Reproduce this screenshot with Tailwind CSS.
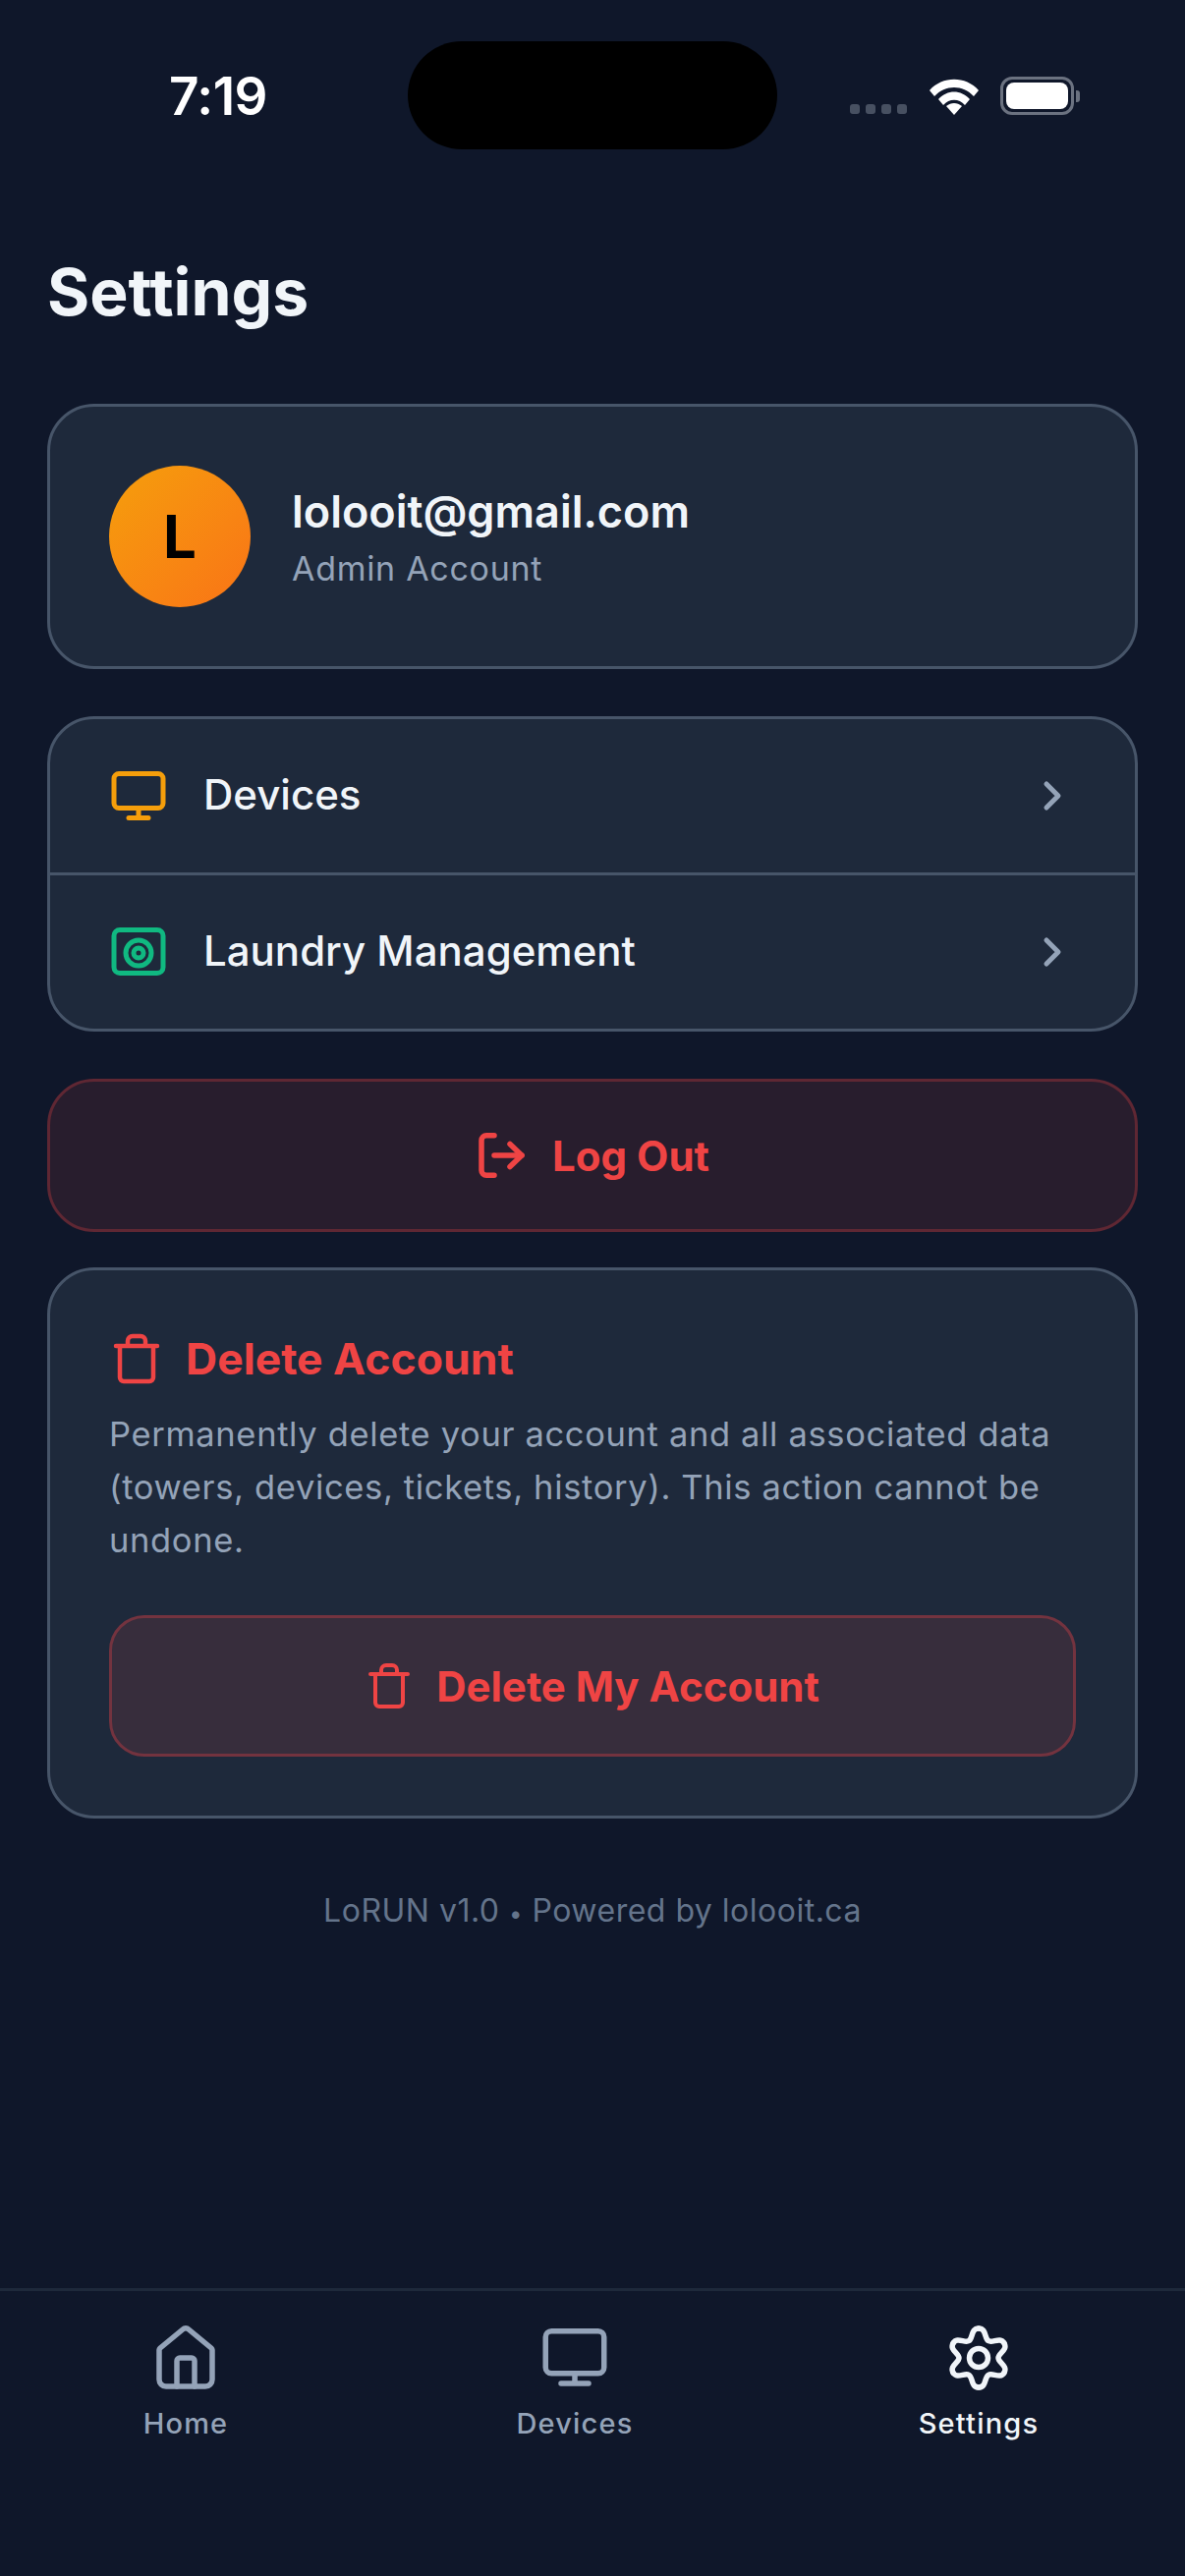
<!DOCTYPE html>
<html>
<head>
<meta charset="utf-8">
<script src="https://cdn.jsdelivr.net/npm/@tailwindcss/browser@4"></script>
</head>
<body class="bg-[#0f172a]">
<div class="relative w-[1206px] h-[2622px] flex flex-col bg-[#0f172a] font-['Inter',sans-serif] overflow-hidden">

  <!-- status bar -->
  <div class="relative h-[257px] shrink-0">
    <div class="absolute left-[162px] top-[67px] text-[53px] leading-[62px] font-semibold text-white w-[120px] text-center tracking-[-0.5px]">7:19</div>
    <div class="absolute left-[415px] top-[42px] w-[376px] h-[110px] rounded-[55px] bg-black"></div>
    <div class="absolute left-[865px] top-[106px] flex gap-[6px]">
      <span class="w-[10px] h-[10px] rounded-[3px] bg-[#475061]"></span>
      <span class="w-[10px] h-[10px] rounded-[3px] bg-[#475061]"></span>
      <span class="w-[10px] h-[10px] rounded-[3px] bg-[#475061]"></span>
      <span class="w-[10px] h-[10px] rounded-[3px] bg-[#475061]"></span>
    </div>
    <svg class="absolute left-[945px] top-[79px]" width="52" height="38" viewBox="0 0 52 38" fill="#fff">
      <path d="M1 13 C14 -2 38 -2 51 13 L46 19 C35 7 17 7 6 19 Z"/>
      <path d="M10 22 C19 12 33 12 42 22 L37 28 C31 21 21 21 15 28 Z"/>
      <path d="M18 29 C23 25 29 25 34 29 L26 38 Z"/>
    </svg>
    <div class="absolute left-[1018px] top-[78px] w-[75px] h-[39px] rounded-[12px] border-[3px] border-[#6b7280] p-[3px]">
      <div class="w-full h-full rounded-[8px] bg-white"></div>
    </div>
    <div class="absolute left-[1095px] top-[92px] w-[4px] h-[12px] rounded-r-[3px] bg-[#6b7280]"></div>
  </div>

  <!-- main -->
  <div class="flex-1 px-[48px]">
    <h1 class="h-[80px] leading-[80px] text-[66px] font-bold text-[#f1f5f9]">Settings</h1>

    <div class="mt-[74px] h-[270px] rounded-[48px] border-[3px] border-[#475569] bg-[#1e293b] px-[60px] flex items-center gap-[42px]">
      <div class="w-[144px] h-[144px] rounded-full bg-linear-to-br from-[#f59e0b] to-[#f97316] flex items-center justify-center text-[60px] font-bold text-black">L</div>
      <div class="pt-[2px]">
        <div class="text-[45px] leading-[60px] font-semibold text-[#f1f5f9]">lolooit@gmail.com</div>
        <div class="mt-[4px] text-[34px] tracking-[0.7px] leading-[48px] text-[#94a3b8]">Admin Account</div>
      </div>
    </div>

    <div class="mt-[48px] rounded-[48px] border-[3px] border-[#475569] bg-[#1e293b]">
      <div class="h-[156px] px-[60px] flex items-center gap-[36px]">
        <svg class="w-[60px] h-[60px] shrink-0" viewBox="0 0 60 60" fill="none" stroke="#f59e0b" stroke-width="5" stroke-linecap="round" stroke-linejoin="round">
          <rect x="5" y="7.5" width="50" height="35" rx="5"/><path d="M30 43V52M20 52.5H40"/>
        </svg>
        <span class="flex-1 text-[42px] leading-[60px] pb-[3px] font-medium text-[#f1f5f9]">Devices</span>
        <svg class="w-[36px] h-[36px]" viewBox="0 0 36 36" fill="none" stroke="#94a3b8" stroke-width="5" stroke-linecap="round" stroke-linejoin="round"><path d="M6 6L18 18L6 30"/></svg>
      </div>
      <div class="h-[3px] bg-[#475569]"></div>
      <div class="h-[156px] px-[60px] flex items-center gap-[36px]">
        <svg class="w-[60px] h-[60px] shrink-0" viewBox="0 0 60 60" fill="none" stroke="#10b981" stroke-width="5">
          <rect x="5" y="7.5" width="50" height="44" rx="6"/><circle cx="30" cy="31" r="13"/><circle cx="30" cy="31" r="5"/>
        </svg>
        <span class="flex-1 text-[42px] leading-[60px] pb-[3px] font-medium text-[#f1f5f9]">Laundry Management</span>
        <svg class="w-[36px] h-[36px]" viewBox="0 0 36 36" fill="none" stroke="#94a3b8" stroke-width="5" stroke-linecap="round" stroke-linejoin="round"><path d="M6 6L18 18L6 30"/></svg>
      </div>
    </div>

    <div class="mt-[48px] h-[156px] rounded-[48px] border-[3px] border-[#5f2733] bg-[#281d2d] flex items-center justify-center gap-[24px]">
      <svg class="w-[54px] h-[54px]" viewBox="0 0 54 54" fill="none" stroke="#ef4444" stroke-width="5.5" stroke-linecap="round" stroke-linejoin="round">
        <path d="M19 6.75H11a5 5 0 0 0-5 5V42.25a5 5 0 0 0 5 5H19"/><path d="M35 15.5L47 27L35 38.5"/><path d="M47 27H19"/>
      </svg>
      <span class="text-[42px] font-bold text-[#ef4444]">Log Out</span>
    </div>

    <div class="mt-[36px] h-[561px] rounded-[48px] border-[3px] border-[#475569] bg-[#1e293b] px-[60px] pt-[60px]">
      <div class="h-[60px] flex items-center gap-[24px]">
        <svg class="w-[54px] h-[54px]" viewBox="0 0 54 54" fill="none" stroke="#ef4444" stroke-width="4.5" stroke-linecap="round" stroke-linejoin="round">
          <path d="M7 14H49M11 14V46a4 4 0 0 0 4 4H41a4 4 0 0 0 4-4V14M19 14V9a5 5 0 0 1 5-5H32a5 5 0 0 1 5 5V14"/>
        </svg>
        <span class="text-[44.5px] leading-[60px] font-bold text-[#ef4444]">Delete Account</span>
      </div>
      <p class="mt-[20px] text-[34.5px] tracking-[0.65px] leading-[54px] text-[#94a3b8]">Permanently delete your account and all associated data (towers, devices, tickets, history). This action cannot be undone.</p>
      <div class="mt-[49px] h-[144px] rounded-[36px] border-[3px] border-[#73333f] bg-[#372d3c] flex items-center justify-center gap-[24px]">
        <svg class="w-[48px] h-[48px]" viewBox="0 0 48 48" fill="none" stroke="#ef4444" stroke-width="4" stroke-linecap="round" stroke-linejoin="round">
          <path d="M5 12H43M10 12V41a4 4 0 0 0 4 4H34a4 4 0 0 0 4-4V12M16 12V8a5 5 0 0 1 5-5H27a5 5 0 0 1 5 5V12"/>
        </svg>
        <span class="text-[42px] font-bold text-[#ef4444]">Delete My Account</span>
      </div>
    </div>

    <div class="mt-[70px] text-center text-[32px] tracking-[0.5px] leading-[48px] text-[#64748b]">LoRUN v1.0 <span class="text-[24px]">•</span> Powered by lolooit.ca</div>
  </div>

  <!-- tab bar -->
  <div class="h-[293px] shrink-0 border-t-[3px] border-[#1e293b] flex pt-[32px]">
    <div class="w-[378px] flex flex-col items-center">
      <svg class="w-[72px] h-[72px]" viewBox="0 0 72 72" fill="none" stroke="#94a3b8" stroke-width="5.5" stroke-linecap="round" stroke-linejoin="round"><path d="M9 28a3 3 0 0 1 1-2L33 7a4.5 4.5 0 0 1 6 0L62 26a3 3 0 0 1 1 2V58a7 7 0 0 1-7 7H16a7 7 0 0 1-7-7Z"/><path d="M27 65V39a3 3 0 0 1 3-3H42a3 3 0 0 1 3 3V65"/></svg>
      <span class="mt-[11px] text-[29px] leading-[40px] tracking-[1.2px] font-medium text-[#94a3b8]">Home</span>
    </div>
    <div class="w-[414px] flex flex-col items-center">
      <svg class="w-[72px] h-[72px]" viewBox="0 0 72 72" fill="none" stroke="#94a3b8" stroke-width="5.5" stroke-linecap="round" stroke-linejoin="round"><rect x="6.25" y="8.75" width="59.5" height="43" rx="6"/><path d="M36 52V62M22 62H50"/></svg>
      <span class="mt-[11px] text-[29px] leading-[40px] tracking-[1.2px] font-medium text-[#94a3b8]">Devices</span>
    </div>
    <div class="w-[408px] flex flex-col items-center">
      <svg class="w-[72px] h-[72px]" viewBox="0 0 72 72" fill="none" stroke="#f1f5f9" stroke-width="5.5" stroke-linecap="round" stroke-linejoin="round">
        <path d="M36 6C44 6 41.67 16.18 46 18.68C50.33 21.18 57.98 14.07 61.98 21"/>
        <path transform="rotate(60 36 36)" d="M36 6C44 6 41.67 16.18 46 18.68C50.33 21.18 57.98 14.07 61.98 21"/>
        <path transform="rotate(120 36 36)" d="M36 6C44 6 41.67 16.18 46 18.68C50.33 21.18 57.98 14.07 61.98 21"/>
        <path transform="rotate(180 36 36)" d="M36 6C44 6 41.67 16.18 46 18.68C50.33 21.18 57.98 14.07 61.98 21"/>
        <path transform="rotate(240 36 36)" d="M36 6C44 6 41.67 16.18 46 18.68C50.33 21.18 57.98 14.07 61.98 21"/>
        <path transform="rotate(300 36 36)" d="M36 6C44 6 41.67 16.18 46 18.68C50.33 21.18 57.98 14.07 61.98 21"/>
        <circle cx="36" cy="36" r="9.5"/>
      </svg>
      <span class="mt-[11px] text-[29px] leading-[40px] tracking-[1.2px] font-medium text-[#f1f5f9]">Settings</span>
    </div>
  </div>
</div>
</body>
</html>
